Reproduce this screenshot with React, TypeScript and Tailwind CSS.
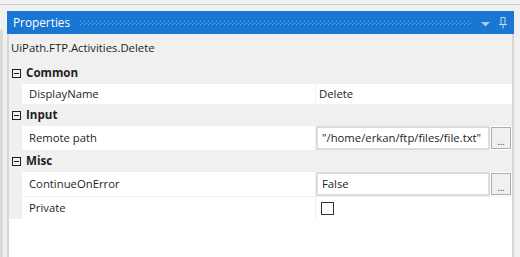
import type { ReactNode } from 'react'

function MinusBox() {
  return (
    <svg width="9" height="9" viewBox="0 0 9 9" className="shrink-0">
      <rect x="0.5" y="0.5" width="8" height="8" fill="none" stroke="#1e1e1e" />
      <rect x="2" y="4" width="5" height="1" fill="#1e1e1e" />
    </svg>
  )
}

function Category({ label }: { label: string }) {
  return (
    <div className="flex items-center h-[22px] bg-[#f0f0f0]">
      <div className="ml-[3px]">
        <MinusBox />
      </div>
      <span className="ml-[5px] font-bold text-[11.6px]">{label}</span>
    </div>
  )
}

function Row({ name, height, children }: { name: string; height: string; children?: ReactNode }) {
  return (
    <div className={`flex ${height}`}>
      <div className="w-[13px] bg-[#f0f0f0]" />
      <div className="w-[293px] bg-white flex items-center pl-[7px]">{name}</div>
      <div className="w-px bg-[#f0f0f0]" />
      <div className="flex-1 bg-white flex items-center">{children}</div>
    </div>
  )
}

function TextValue({ value }: { value: string }) {
  return (
    <div className="flex h-full w-full">
      <div className="w-[174px] h-full border-2 border-[#dcdcdc] bg-white flex items-center pl-[4px] whitespace-nowrap overflow-hidden">
        {value}
      </div>
      <div className="ml-px mt-px w-[20px] h-[22px] border border-[#adadad] bg-[#f0f0f0] flex items-end justify-center pb-[2px] text-[9px] leading-none">
        ...
      </div>
    </div>
  )
}

export default function App() {
  return (
    <div className="w-[520px] h-[257px] bg-[#f0f0f0] overflow-hidden font-['Open_Sans',sans-serif] text-[11.3px] text-[#1e1e1e]">
      <div className="h-[4px]" />
      <div className="h-px bg-[#cdcdcd]" />
      <div className="flex">
        <div className="w-[3px] mt-[25px] h-[300px] bg-[#dadada]" />
        <div className="ml-[4px] mt-[6px] w-[507px] flex flex-col h-[260px]">
          <div className="h-[23px] bg-[#1976d2] flex items-center text-white">
            <span className="ml-[6px] text-[11.8px]">Properties</span>
            <svg className="ml-[10px] flex-1 h-[4px]" preserveAspectRatio="none">
              <defs>
                <pattern id="dots" width="4" height="3" patternUnits="userSpaceOnUse">
                  <rect x="0" y="0" width="1" height="1" fill="#6aa6e4" />
                  <rect x="2" y="2" width="1" height="1" fill="#6aa6e4" />
                </pattern>
              </defs>
              <rect width="100%" height="100%" fill="url(#dots)" />
            </svg>
            <svg width="9" height="5" viewBox="0 0 9 5" className="ml-[10px] mt-[3px]">
              <path d="M0 0h9L4.5 4.5z" fill="#a9cbee" />
            </svg>
            <svg width="10" height="12" viewBox="0 0 10 12" className="ml-[8px] mr-[6px]">
              <path d="M3 0.5h4v7H3z" fill="none" stroke="#c9def4" />
              <path d="M1 7.5h8" stroke="#c9def4" />
              <path d="M5 7.5v4" stroke="#c9def4" />
            </svg>
          </div>
          <div className="flex-1 flex flex-col border-x-2 border-[#d6d6d6]">
            <div className="h-[28px] flex items-center pl-[2px]">UiPath.FTP.Activities.Delete</div>
            <div className="flex flex-col bg-[#f0f0f0]">
              <Category label="Common" />
              <Row name="DisplayName" height="h-[20px]">
                <span className="pl-[3px]">Delete</span>
              </Row>
              <Category label="Input" />
              <Row name="Remote path" height="h-[24px]">
                <TextValue value={'"/home/erkan/ftp/files/file.txt"'} />
              </Row>
              <Category label="Misc" />
              <Row name="ContinueOnError" height="h-[24px]">
                <TextValue value="False" />
              </Row>
              <div className="h-px" />
              <Row name="Private" height="h-[22px]">
                <div className="ml-[5px] w-[13px] h-[13px] border border-[#333333] bg-white" />
              </Row>
            </div>
            <div className="flex-1 bg-white" />
          </div>
        </div>
      </div>
    </div>
  )
}
